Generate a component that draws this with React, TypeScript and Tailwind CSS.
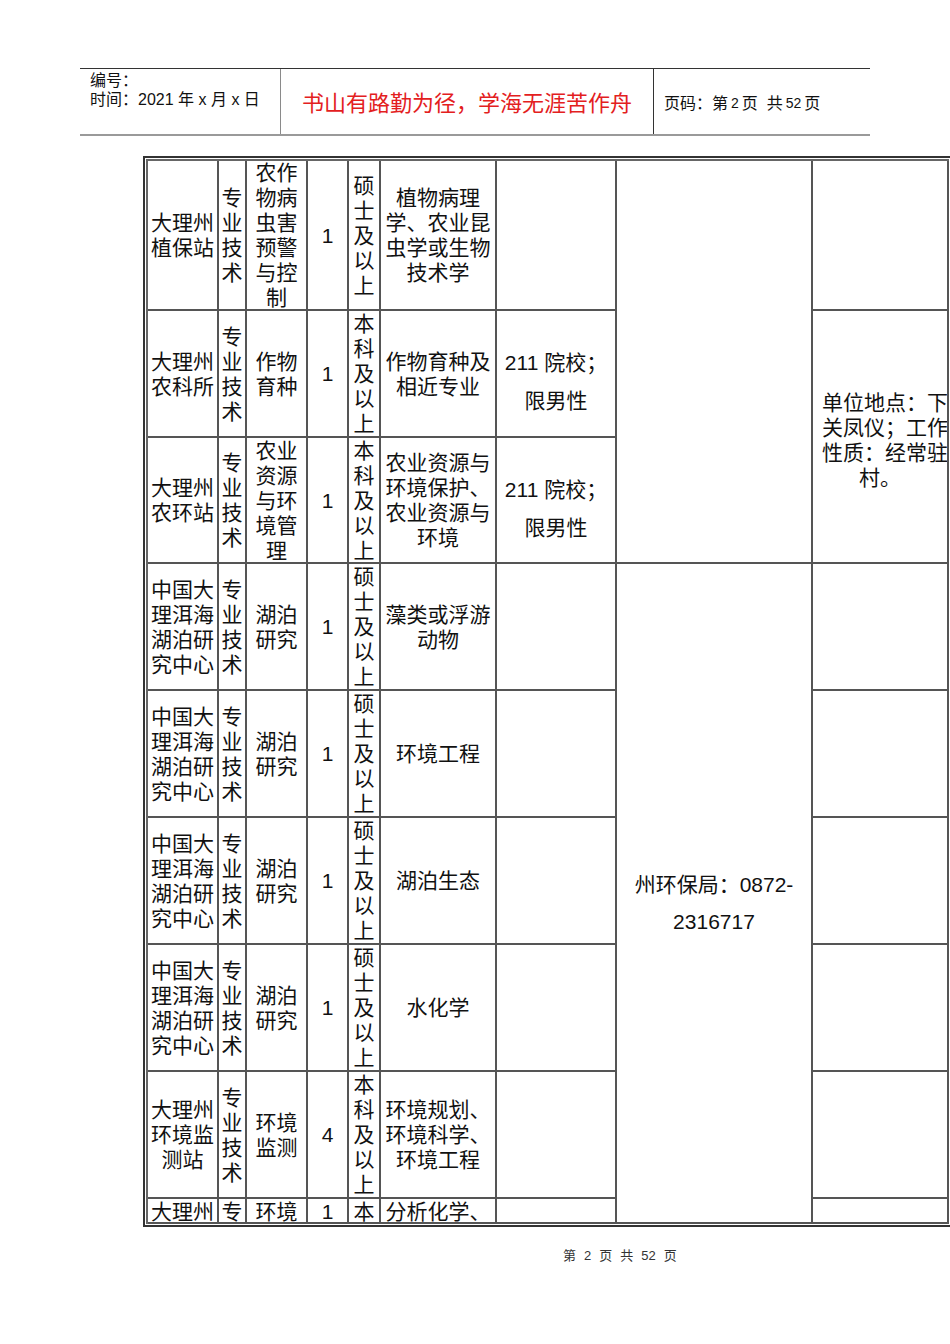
import React from "react";

const F = { fontFamily: '"Liberation Sans", "Noto Sans CJK SC", sans-serif' };

function Lines({ lines }: { lines: string[] }) {
  return (
    <>
      {lines.map((l, i) => (
        <div key={i} className="whitespace-nowrap">
          {l}
        </div>
      ))}
    </>
  );
}

function Cell({
  lines,
  className = "",
  children,
}: {
  lines?: string[];
  className?: string;
  children?: React.ReactNode;
}) {
  return (
    <div
      className={
        "border-r-2 border-b-2 border-[#555] flex flex-col items-center text-center " +
        (className.includes("overflow-visible") ? "" : "overflow-hidden ") +
        (className.includes("justify-start") ? "" : "justify-center ") +
        className
      }
    >
      {lines ? <Lines lines={lines} /> : children}
    </div>
  );
}

type Row = {
  unit: string[];
  kind: string[];
  post: string[];
  n: string;
  edu: string[];
  major: string[];
  other?: boolean;
};

const rows: Row[] = [
  {
    unit: ["大理州", "植保站"],
    kind: ["专", "业", "技", "术"],
    post: ["农作", "物病", "虫害", "预警", "与控", "制"],
    n: "1",
    edu: ["硕", "士", "及", "以", "上"],
    major: ["植物病理", "学、农业昆", "虫学或生物", "技术学"],
  },
  {
    unit: ["大理州", "农科所"],
    kind: ["专", "业", "技", "术"],
    post: ["作物", "育种"],
    n: "1",
    edu: ["本", "科", "及", "以", "上"],
    major: ["作物育种及", "相近专业"],
    other: true,
  },
  {
    unit: ["大理州", "农环站"],
    kind: ["专", "业", "技", "术"],
    post: ["农业", "资源", "与环", "境管", "理"],
    n: "1",
    edu: ["本", "科", "及", "以", "上"],
    major: ["农业资源与", "环境保护、", "农业资源与", "环境"],
    other: true,
  },
  {
    unit: ["中国大", "理洱海", "湖泊研", "究中心"],
    kind: ["专", "业", "技", "术"],
    post: ["湖泊", "研究"],
    n: "1",
    edu: ["硕", "士", "及", "以", "上"],
    major: ["藻类或浮游", "动物"],
  },
  {
    unit: ["中国大", "理洱海", "湖泊研", "究中心"],
    kind: ["专", "业", "技", "术"],
    post: ["湖泊", "研究"],
    n: "1",
    edu: ["硕", "士", "及", "以", "上"],
    major: ["环境工程"],
  },
  {
    unit: ["中国大", "理洱海", "湖泊研", "究中心"],
    kind: ["专", "业", "技", "术"],
    post: ["湖泊", "研究"],
    n: "1",
    edu: ["硕", "士", "及", "以", "上"],
    major: ["湖泊生态"],
  },
  {
    unit: ["中国大", "理洱海", "湖泊研", "究中心"],
    kind: ["专", "业", "技", "术"],
    post: ["湖泊", "研究"],
    n: "1",
    edu: ["硕", "士", "及", "以", "上"],
    major: ["水化学"],
  },
  {
    unit: ["大理州", "环境监", "测站"],
    kind: ["专", "业", "技", "术"],
    post: ["环境", "监测"],
    n: "4",
    edu: ["本", "科", "及", "以", "上"],
    major: ["环境规划、", "环境科学、", "环境工程"],
  },
];

function Other({ show }: { show?: boolean }) {
  if (!show) return <Cell />;
  return (
    <Cell className="justify-start pt-[39px]">
      <div className="whitespace-nowrap">211 院校；</div>
      <div className="whitespace-nowrap mt-[13px]">限男性</div>
    </Cell>
  );
}

export default function App() {
  const cells: React.ReactNode[] = [];
  rows.forEach((r, i) => {
    cells.push(<Cell key={`u${i}`} lines={r.unit} />);
    cells.push(<Cell key={`k${i}`} lines={r.kind} />);
    cells.push(<Cell key={`p${i}`} lines={r.post} />);
    cells.push(<Cell key={`n${i}`} lines={[r.n]} />);
    cells.push(<Cell key={`e${i}`} lines={r.edu} />);
    cells.push(<Cell key={`m${i}`} lines={r.major} />);
    cells.push(<Other key={`o${i}`} show={r.other} />);
    if (i === 0) {
      cells.push(<Cell key="c0" className="row-span-3" />);
      cells.push(<Cell key="r0" />);
    } else if (i === 1) {
      cells.push(
        <Cell key="r1" className="row-span-2 justify-start pt-[79px] items-stretch">
          <div className="whitespace-nowrap text-left pl-[9px]">单位地点：下</div>
          <div className="whitespace-nowrap text-left pl-[9px]">关凤仪；工作</div>
          <div className="whitespace-nowrap text-left pl-[9px]">性质：经常驻</div>
          <div className="whitespace-nowrap text-center">村。</div>
        </Cell>
      );
    } else if (i === 2) {
      // columns 8 and 9 are covered by spanning cells
    } else if (i === 3) {
      cells.push(
        <Cell key="c3" className="row-span-6 justify-start pt-[308px]">
          <div className="whitespace-nowrap">州环保局：0872-</div>
          <div className="whitespace-nowrap mt-[12px]">2316717</div>
        </Cell>
      );
      cells.push(<Cell key="r3" />);
    } else {
      cells.push(<Cell key={`r${i}`} />);
    }
  });
  // truncated last row
  const last = ["大理州", "专", "环境", "1", "本", "分析化学、"];
  last.forEach((t, j) => {
    cells.push(
      <Cell key={`l${j}`} className="justify-start overflow-visible pt-[1px]">
        <div className="whitespace-nowrap leading-[23px]">{t}</div>
      </Cell>
    );
  });
  cells.push(<Cell key="l6" />);
  cells.push(<Cell key="l7" />);

  return (
    <div className="w-[950px] h-[1344px] bg-white overflow-hidden text-[#111]" style={F}>
      {/* Header */}
      <div className="pt-[68px] pl-[80px]">
        <div className="flex w-[790px] h-[68px] border-t border-[#333] border-b-2 border-b-[#9a9a9a]">
          <div className="w-[201px] border-r border-[#8a8a8a] pl-[10px] pt-[2px] text-[16px] leading-[19px] text-[#111]">
            <div>编号：</div>
            <div>时间：2021 年 x 月 x 日</div>
          </div>
          <div className="w-[373px] border-r border-[#333] flex items-center justify-center pt-[5px] text-[22px] leading-[30px] text-[#e3201e]">
            书山有路勤为径，学海无涯苦作舟
          </div>
          <div className="flex-1 flex items-center pl-[10px] pt-[3px] text-[16px] leading-[19px] text-[#111]">
            页码：第 <span className="text-[14px] mx-[3px]">2</span> 页&nbsp;&nbsp;共 <span className="text-[14px] mx-[3px]">52</span> 页
          </div>
        </div>
      </div>

      {/* Table */}
      <div className="mt-[20px] ml-[143px] w-[809px] border-2 border-[#333] p-[1px]">
        <div className="grid grid-cols-[71px_28px_61px_41px_32px_116px_120px_196px_136px] grid-rows-[150px_127px_126px_127px_127px_127px_127px_127px_25px] border-t-2 border-l-2 border-[#666] text-[21px] leading-[25px]">
          {cells}
        </div>
      </div>

      {/* Footer */}
      <div className="mt-[20px] ml-[563px] flex gap-[8px] text-[13px] leading-[18px] text-[#333]">
        <span>第</span>
        <span>2</span>
        <span>页</span>
        <span>共</span>
        <span>52</span>
        <span>页</span>
      </div>
    </div>
  );
}
